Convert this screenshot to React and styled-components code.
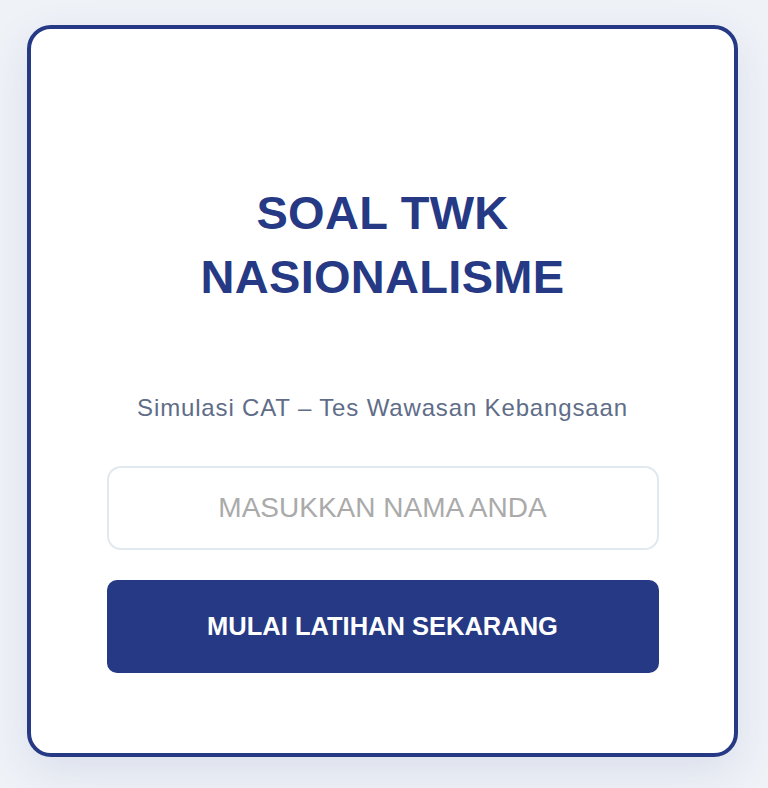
import React from "react";
import styled, { createGlobalStyle } from "styled-components";

const GlobalStyle = createGlobalStyle`
  html, body {
    margin: 0;
    padding: 0;
    background: #eff2f7;
    font-family: "Liberation Sans", Arial, Helvetica, sans-serif;
  }
  * { box-sizing: border-box; }
`;

const Page = styled.main`
  min-height: 788px;
  padding: 25px 30px 30px 27px;
`;

const Card = styled.section`
  background: #ffffff;
  border: 4px solid #253985;
  border-radius: 24px;
  box-shadow: 0 14px 44px rgba(37, 57, 133, 0.1);
  padding: 152px 0 80px;
`;

const Content = styled.div`
  width: 552px;
  margin: 0 auto;
  display: flex;
  flex-direction: column;
  align-items: stretch;
  text-align: center;
`;

const Title = styled.h1`
  margin: 0;
  font-size: 47px;
  line-height: 64px;
  font-weight: 700;
  letter-spacing: 0.3px;
  color: #253985;
`;

const Subtitle = styled.p`
  margin: 83px 0 42px;
  font-size: 24px;
  line-height: 32px;
  letter-spacing: 0.85px;
  color: #5f6d88;
`;

const NameInput = styled.input`
  height: 84px;
  width: 100%;
  border: 2px solid #e2e8f0;
  border-radius: 14px;
  background: #ffffff;
  font-family: inherit;
  font-size: 28px;
  text-align: center;
  color: #1e293b;
  outline: none;

  &::placeholder {
    color: #aaaaaa;
  }
`;

const StartButton = styled.button`
  margin-top: 30px;
  height: 93px;
  width: 100%;
  border: none;
  border-radius: 10px;
  background: #253985;
  color: #ffffff;
  font-family: inherit;
  font-size: 25.5px;
  font-weight: 700;
  cursor: pointer;
`;

export default function App() {
  return (
    <>
      <GlobalStyle />
      <Page>
        <Card>
          <Content>
            <Title>SOAL TWK NASIONALISME</Title>
            <Subtitle>Simulasi CAT – Tes Wawasan Kebangsaan</Subtitle>
            <NameInput type="text" placeholder="MASUKKAN NAMA ANDA" />
            <StartButton type="button">MULAI LATIHAN SEKARANG</StartButton>
          </Content>
        </Card>
      </Page>
    </>
  );
}
